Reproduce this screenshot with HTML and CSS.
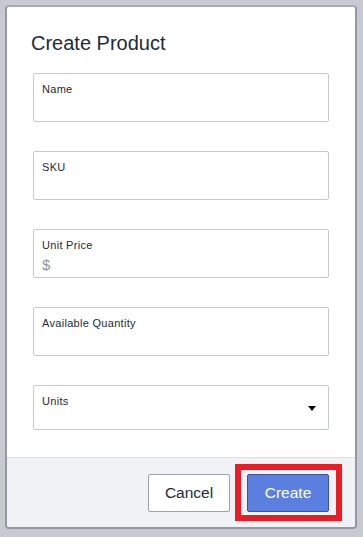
FILE: index.html
```html
<!DOCTYPE html>
<html lang="en">
<head>
    <meta charset="UTF-8">
    <meta name="viewport" content="width=device-width, initial-scale=1.0">
    <title>Create Product</title>
    <link rel="stylesheet" href="styles.css">
</head>
<body>
    <div class="dialog">
        <div class="dialog-body">
            <h2>Create Product</h2>

            <div class="field">
                <label>Name</label>
            </div>
            <div class="field">
                <label>SKU</label>
            </div>
            <div class="field">
                <label>Unit Price</label>
                <span class="prefix">$</span>
            </div>
            <div class="field">
                <label>Available Quantity</label>
            </div>
            <div class="field select">
                <label>Units</label>
                <span class="arrow"></span>
            </div>
        </div>

        <div class="dialog-footer">
            <button class="btn">Cancel</button>
            <button class="btn primary">Create</button>
        </div>
    </div>
</body>
</html>
```

FILE: styles.css
```css
body {
    font-family: "Liberation Sans", Arial, sans-serif;
    margin: 0;
    padding: 5px;
    background-color: #c7cbd1;
    color: #202b3b;
}
.dialog {
    width: 352px;
    height: 524px;
    box-sizing: border-box;
    background-color: #fff;
    border: 2px solid #9299a5;
    border-top-color: #a4abb6;
    border-radius: 4px;
    display: flex;
    flex-direction: column;
    overflow: hidden;
}
.dialog-body {
    flex: 1;
    padding: 25px 26px 0;
}
h2 {
    margin: 0 0 18px -2px;
    font-size: 20px;
    font-weight: normal;
    line-height: 23px;
}
.field {
    height: 49px;
    box-sizing: border-box;
    border: 1px solid #c5c9d2;
    border-radius: 2px;
    padding: 9px 8px 0;
    margin-bottom: 29px;
    display: flex;
    flex-direction: column;
}
.field label {
    font-size: 11px;
    line-height: 13px;
    letter-spacing: 0.3px;
}
.prefix {
    margin-top: 4px;
    font-size: 15px;
    line-height: 17px;
    color: #8d9893;
}
.field.select {
    height: 45px;
    margin-bottom: 0;
    flex-direction: row;
    justify-content: space-between;
    padding-right: 12px;
}
.arrow {
    margin-top: 11px;
    width: 0;
    height: 0;
    border-left: 4.5px solid transparent;
    border-right: 4.5px solid transparent;
    border-top: 5px solid #000;
}
.dialog-footer {
    height: 70px;
    box-sizing: border-box;
    background-color: #f1f2f6;
    border-top: 1px solid #dcdfe5;
    padding: 16px 26px 0;
    display: flex;
    justify-content: flex-end;
    gap: 17px;
}
.btn {
    width: 82px;
    height: 38px;
    font-family: inherit;
    font-size: 15.5px;
    color: #202b3b;
    background-color: #fff;
    border: 1px solid #9ea3ab;
    border-radius: 2px;
    padding: 0;
}
.btn.primary {
    position: relative;
    color: #fff;
    background-color: #5b7fde;
    border-color: #3f51a5;
}
/* red highlight frame around the Create button */
.btn.primary::after {
    content: "";
    position: absolute;
    top: -11px;
    left: -13px;
    right: -14px;
    bottom: -10px;
    border: 6.5px solid #ec1c24;
}
```
